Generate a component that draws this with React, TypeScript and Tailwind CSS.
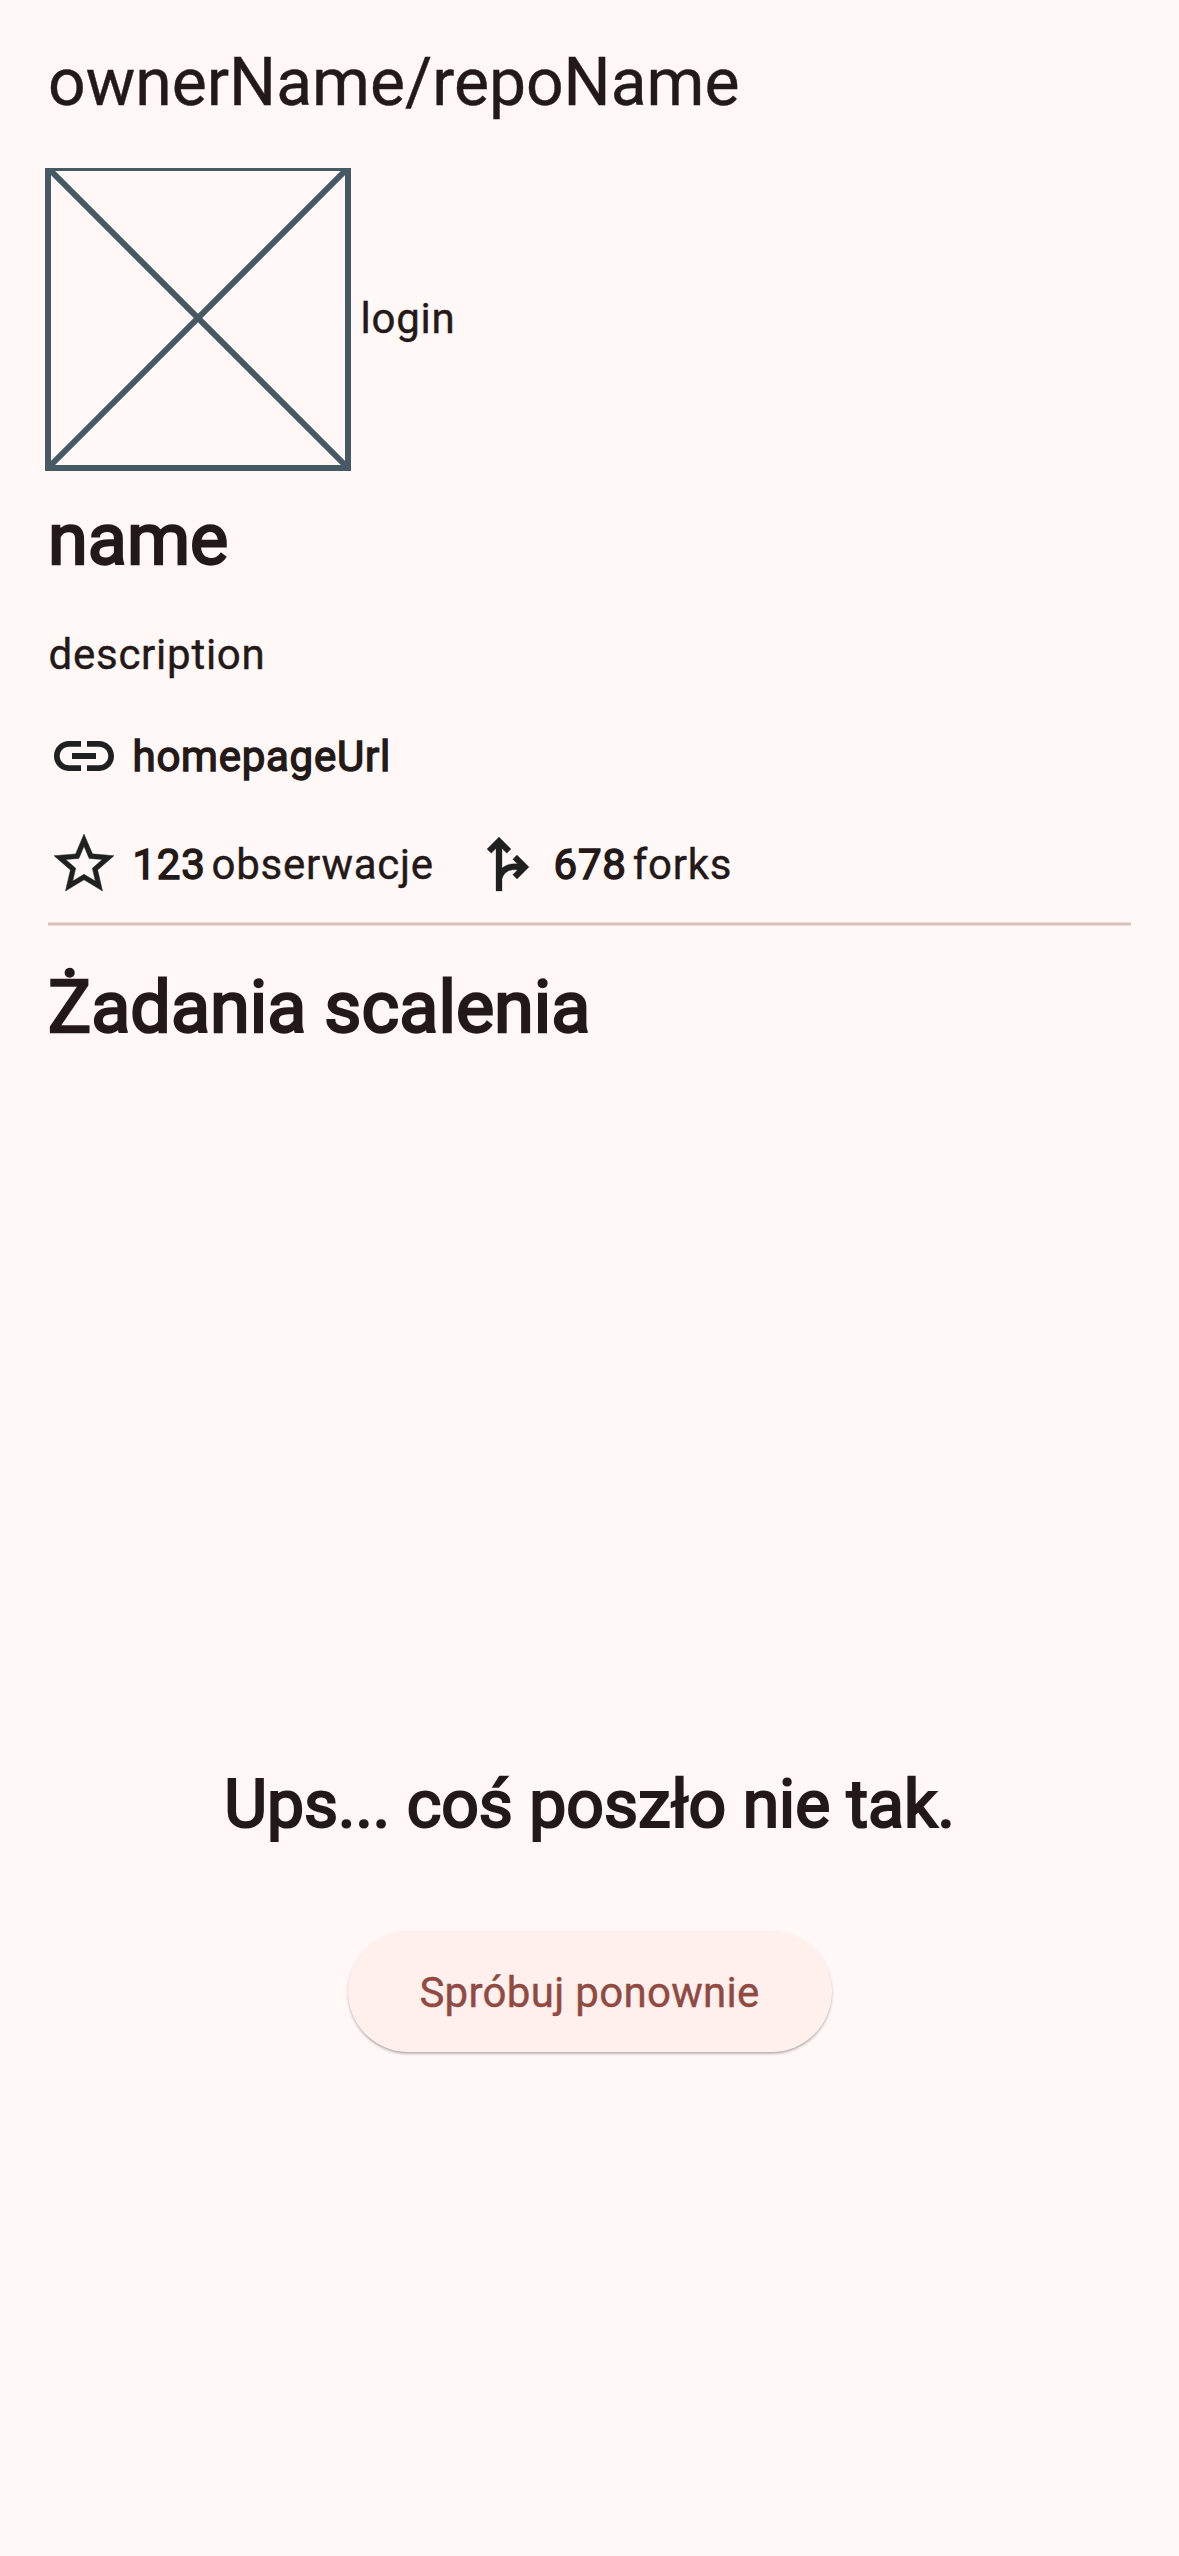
import type { ReactNode } from "react";
import { MdForkRight, MdLink, MdStarOutline } from "react-icons/md";

function Strong({ children }: { children: ReactNode }) {
  return <span className="[-webkit-text-stroke:0.034em_currentColor]">{children}</span>;
}

function Stat({ icon, value, label }: { icon: ReactNode; value: string; label: string }) {
  return (
    <div className="flex items-center">
      {icon}
      <div className="ml-[12.5px] flex gap-1.5 pt-0.5">
        <Strong>{value}</Strong>
        <span>{label}</span>
      </div>
    </div>
  );
}

export default function App() {
  return (
    <main className="flex h-[2556px] w-[1179px] flex-col bg-[#fff8f6] font-['Roboto',sans-serif] text-[#231918] [-webkit-text-stroke:0.4px_currentColor]">
      <header className="flex h-[168px] shrink-0 items-center px-12 pb-0.5 text-[66px] leading-[84px]">
        ownerName/repoName
      </header>
      <div className="flex flex-1 flex-col overflow-hidden px-12">
        <section className="flex h-[300px] items-center gap-[12.5px]">
          <svg className="size-[300px] overflow-visible" viewBox="0 0 300 300" fill="none" stroke="#455a64" strokeWidth="6">
            <path d="M0 0H300V300H0ZM0 0L300 300M300 0L0 300" />
          </svg>
          <span className="pt-0.5 text-[42px] leading-[60px] tracking-[0.75px]">login</span>
        </section>
        <h1 className="mt-6 text-[72px] leading-[96px]">
          <Strong>name</Strong>
        </h1>
        <p className="mt-[37px] pl-[0.5px] text-[42px] leading-[60px] tracking-[0.75px]">description</p>
        <div className="mt-[35px] flex h-[72px] items-center gap-[12.5px] text-[42px] leading-[60px] tracking-[0.75px]">
          <MdLink className="size-[72px] text-[#1f2120]" />
          <div className="pt-px">
            <Strong>homepageUrl</Strong>
          </div>
        </div>
        <div className="mt-9 flex h-[72px] items-center gap-[35.25px] text-[42px] leading-[60px] tracking-[0.75px]">
          <Stat icon={<MdStarOutline className="size-[72px] text-[#1f2120] [&>path:last-child]:stroke-[0.15]" />} value="123" label="obserwacje" />
          <Stat icon={<MdForkRight className="size-[72px] text-[#1f2120] [&>path:last-child]:stroke-[0.1]" />} value="678" label="forks" />
        </div>
        <hr className="mt-[22px] h-1 shrink-0 border-y border-[#ebddda] bg-[#d8c2be]" />
        <h2 className="mt-[34px] text-[72px] leading-[96px]">
          <Strong>Żadania scalenia</Strong>
        </h2>
        <section className="mt-[707px] flex flex-col items-center">
          <h3 className="text-[66px] leading-[84px]">
            <Strong>Ups... coś poszło nie tak.</Strong>
          </h3>
          <button className="mt-[84px] flex h-[121px] w-[484px] items-center justify-center rounded-full bg-[#fff0ed] pt-0.5 text-[42px] leading-[60px] tracking-[0.3px] text-[#904a42] shadow-[0_2px_3px_-0.5px_rgba(0,0,0,0.35)]">
            Spróbuj ponownie
          </button>
        </section>
      </div>
    </main>
  );
}
